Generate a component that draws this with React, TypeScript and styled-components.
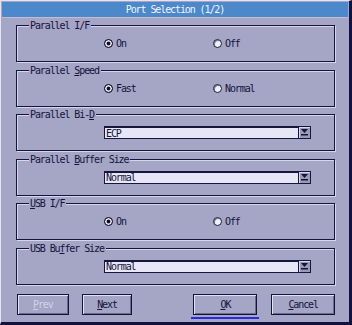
import React from "react";
import styled, { createGlobalStyle } from "styled-components";

const GlobalStyle = createGlobalStyle`
  body {
    margin: 0;
    background: #a5a5c6;
    font-family: "DejaVu Sans Mono", "Liberation Mono", monospace;
  }
`;

const Window = styled.div`
  width: 352px;
  height: 325px;
  box-sizing: border-box;
  background: #a5a5c6;
  border-top: 1px solid #e4e4f2;
  border-left: 1px solid #e4e4f2;
  border-right: 3px solid #12123e;
  border-bottom: 3px solid #12123e;
  padding: 1px 1px 0 1px;
  font-size: 10px;
  letter-spacing: -1.1px;
  color: #14143a;
`;

const TitleBar = styled.div`
  height: 15px;
  background: #4b89cb;
  border-bottom: 1px solid #c9b9d3;
  color: #f4f4ff;
  display: flex;
  align-items: center;
  justify-content: center;
`;

const Body = styled.div`
  width: 319px;
  margin: 7px 0 0 14px;
  display: flex;
  flex-direction: column;
  gap: 7.6px;
`;

const Group = styled.div`
  position: relative;
  height: 37px;
  box-sizing: border-box;
  border: 1px solid #14143e;
  box-shadow: 1px 1px 0 #d6d6ea, inset 1px 1px 0 #d6d6ea;
  display: flex;
  align-items: center;
  padding-left: 87px;
`;

const Legend = styled.span`
  position: absolute;
  top: -6px;
  left: 12px;
  padding: 0 2px 0 1px;
  background: #a5a5c6;
  line-height: 11px;
`;

const Key = styled.span`
  text-decoration: underline;
  text-underline-offset: 1px;
`;

const RadioOption = styled.div`
  width: 109px;
  display: flex;
  align-items: center;
  gap: 3px;
`;

const Dot = styled.span<{ on: boolean }>`
  width: 9px;
  height: 9px;
  box-sizing: border-box;
  border-radius: 50%;
  border: 1px solid #1a1a3a;
  background: ${(p) => (p.on ? "#10102c" : "#f2f2fa")};
  box-shadow: ${(p) =>
    p.on ? "inset 0 0 0 1.5px #f6f6ff" : "inset 1px 1px 0 #8080a0"};
`;

const Select = styled.div`
  width: 207px;
  height: 13px;
  display: flex;
`;

const Field = styled.div`
  flex: 1;
  box-sizing: border-box;
  background: #e6e6f6;
  border-top: 2px solid #16163c;
  border-left: 1px solid #16163c;
  border-bottom: 1px solid #16163c;
  display: flex;
  align-items: center;
  padding-left: 1px;
`;

const ArrowBtn = styled.div`
  width: 13px;
  box-sizing: border-box;
  background: #9a9ab6;
  border: 1px solid #16163c;
  box-shadow: inset 1px 1px 0 #d8d8ec;
  display: flex;
  align-items: center;
  justify-content: center;
`;

const Buttons = styled.div`
  display: flex;
  align-items: flex-start;
  margin-top: 1.4px;
`;

const Button = styled.div<{ w: number; ml: number; disabled?: boolean }>`
  width: ${(p) => p.w}px;
  height: 21px;
  margin-left: ${(p) => p.ml}px;
  box-sizing: border-box;
  border: 1px solid #14143a;
  box-shadow: inset 1px 1px 0 #e2e2f2, inset -1px -1px 0 #6a6a8c;
  display: flex;
  align-items: center;
  justify-content: center;
  color: ${(p) => (p.disabled ? "#d2d2e6" : "#14143a")};
`;

const FocusRing = styled.div<{ ml: number }>`
  margin-left: ${(p) => p.ml}px;
  padding: 0 2px 2px;
  border-bottom: 2px solid #2a2ae0;
`;

const Radio: React.FC<{ on: boolean; label: React.ReactNode }> = ({
  on,
  label,
}) => (
  <RadioOption>
    <Dot on={on} />
    <span>{label}</span>
  </RadioOption>
);

const Dropdown: React.FC<{ value: string }> = ({ value }) => (
  <Select>
    <Field>{value}</Field>
    <ArrowBtn>
      <svg width="7" height="7" viewBox="0 0 7 7">
        <path d="M0 0h7L3.5 4z" fill="#14143a" />
        <rect x="0" y="5" width="7" height="1.5" fill="#14143a" />
      </svg>
    </ArrowBtn>
  </Select>
);

export default function App() {
  return (
    <>
      <GlobalStyle />
      <Window>
        <TitleBar>Port Selection (1/2)</TitleBar>
        <Body>
          <Group>
            <Legend>Parallel I/F</Legend>
            <Radio on label="On" />
            <Radio on={false} label="Off" />
          </Group>
          <Group>
            <Legend>
              Parallel <Key>S</Key>peed
            </Legend>
            <Radio on label="Fast" />
            <Radio on={false} label="Normal" />
          </Group>
          <Group>
            <Legend>
              Parallel Bi-<Key>D</Key>
            </Legend>
            <Dropdown value="ECP" />
          </Group>
          <Group>
            <Legend>
              Parallel <Key>B</Key>uffer Size
            </Legend>
            <Dropdown value="Normal" />
          </Group>
          <Group>
            <Legend>
              <Key>U</Key>SB I/F
            </Legend>
            <Radio on label="On" />
            <Radio on={false} label="Off" />
          </Group>
          <Group>
            <Legend>
              USB Bu<Key>f</Key>fer Size
            </Legend>
            <Dropdown value="Normal" />
          </Group>
          <Buttons>
            <Button w={52} ml={1} disabled>
              <Key>P</Key>rev
            </Button>
            <Button w={51} ml={13}>
              <Key>N</Key>ext
            </Button>
            <FocusRing ml={59}>
              <Button w={64} ml={0}>
                <Key>O</Key>K
              </Button>
            </FocusRing>
            <Button w={64} ml={12}>
              <Key>C</Key>ancel
            </Button>
          </Buttons>
        </Body>
      </Window>
    </>
  );
}
